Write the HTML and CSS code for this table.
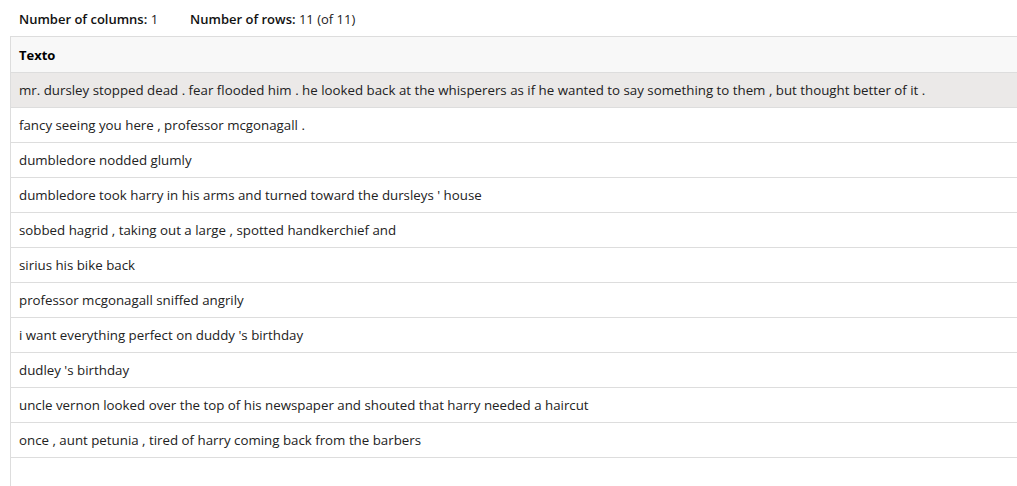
FILE: index.html
```html
<!DOCTYPE html>
<html lang="en">
<head>
  <meta charset="UTF-8">
  <title>Table preview</title>
  <link rel="stylesheet" href="styles.css">
</head>
<body>
  <div class="info">
    <span class="info-item"><b>Number of columns:</b> 1</span>
    <span class="info-item"><b>Number of rows:</b> 11 (of 11)</span>
  </div>
  <div class="grid">
    <table>
      <thead>
        <tr><th>Texto</th></tr>
      </thead>
      <tbody>
        <tr class="selected"><td>mr. dursley stopped dead . fear flooded him . he looked back at the whisperers as if he wanted to say something to them , but thought better of it .</td></tr>
        <tr><td>fancy seeing you here , professor mcgonagall .</td></tr>
        <tr><td>dumbledore nodded glumly</td></tr>
        <tr><td>dumbledore took harry in his arms and turned toward the dursleys ' house</td></tr>
        <tr><td>sobbed hagrid , taking out a large , spotted handkerchief and</td></tr>
        <tr><td>sirius his bike back</td></tr>
        <tr><td>professor mcgonagall sniffed angrily</td></tr>
        <tr><td>i want everything perfect on duddy 's birthday</td></tr>
        <tr><td>dudley 's birthday</td></tr>
        <tr><td>uncle vernon looked over the top of his newspaper and shouted that harry needed a haircut</td></tr>
        <tr><td>once , aunt petunia , tired of harry coming back from the barbers</td></tr>
      </tbody>
    </table>
  </div>
</body>
</html>
```

FILE: styles.css
```css
body {
  margin: 0;
  font-family: "Open Sans", "Noto Sans", sans-serif;
  font-size: 13px;
  color: #222;
  background: #fff;
  overflow: hidden;
}
.info {
  display: flex;
  gap: 32px;
  padding: 10px 19px 0;
  height: 36px;
  box-sizing: border-box;
  color: #222;
}
.info b {
  font-weight: 600;
  color: #111;
}
.grid {
  margin-left: 10px;
  border-left: 1px solid #ddd;
  border-top: 1px solid #ddd;
  height: 460px;
}
table {
  width: 100%;
  border-collapse: collapse;
}
th, td {
  text-align: left;
  padding: 0 8px;
  border-bottom: 1px solid #ddd;
  white-space: nowrap;
}
th {
  height: 35px;
  background: #f8f8f8;
  font-weight: 700;
  color: #000;
}
td {
  height: 34px;
  font-size: 13.3px;
}
.selected td {
  background: #ebe9e8;
}
```
